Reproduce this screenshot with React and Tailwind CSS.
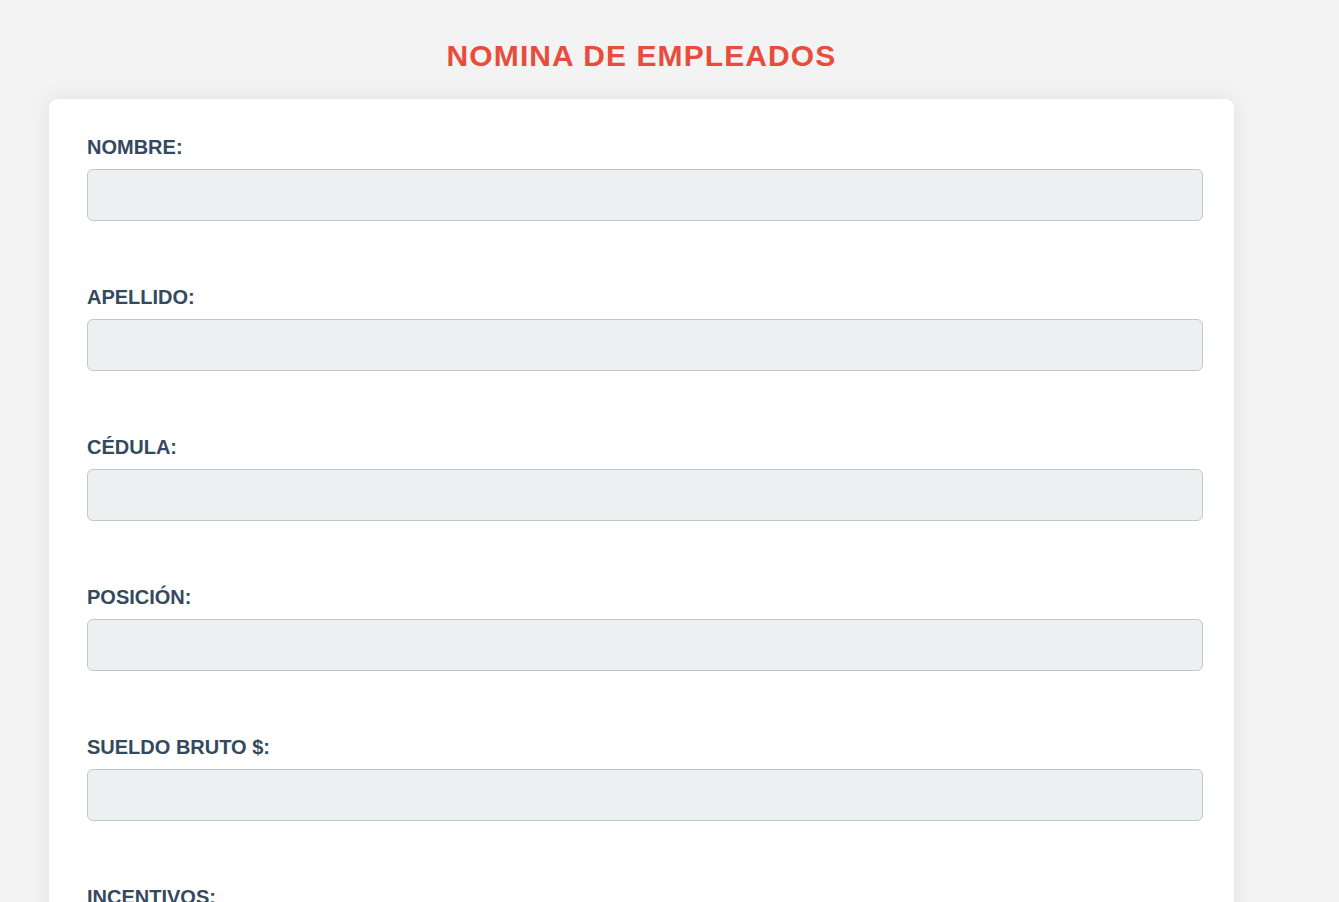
import React from 'react';

const FIELDS = ['NOMBRE:', 'APELLIDO:', 'CÉDULA:', 'POSICIÓN:', 'SUELDO BRUTO $:', 'INCENTIVOS:', 'DEDUCCIONES:', 'SUELDO NETO $:'];

export default function App() {
  return (
    <div className="min-h-screen bg-[#f3f3f3] pt-[36px] pb-10 font-['Liberation_Sans',Arial,sans-serif]">
      <h1 className="w-[1185px] ml-[49px] text-center text-[30px] leading-[40px] font-bold tracking-[1.1px] text-[#e74c3c]">
        NOMINA DE EMPLEADOS
      </h1>
      <div className="w-[1185px] ml-[49px] mt-[23px] bg-white rounded-[9px] shadow-[0_0_20px_rgba(0,0,0,0.08)] pt-[35px] pl-[38px] pb-10">
        {FIELDS.map((f) => (
          <div key={f} className="mb-[63px]">
            <label className="block pt-[2px] text-[20px] leading-[23px] font-bold text-[#34495e]">{f}</label>
            <input
              type="text"
              className="block mt-[10px] w-[1116px] h-[52px] bg-[#ecf0f1] border border-[#c3c7ca] rounded-[6px] px-3 outline-none"
            />
          </div>
        ))}
      </div>
    </div>
  );
}
